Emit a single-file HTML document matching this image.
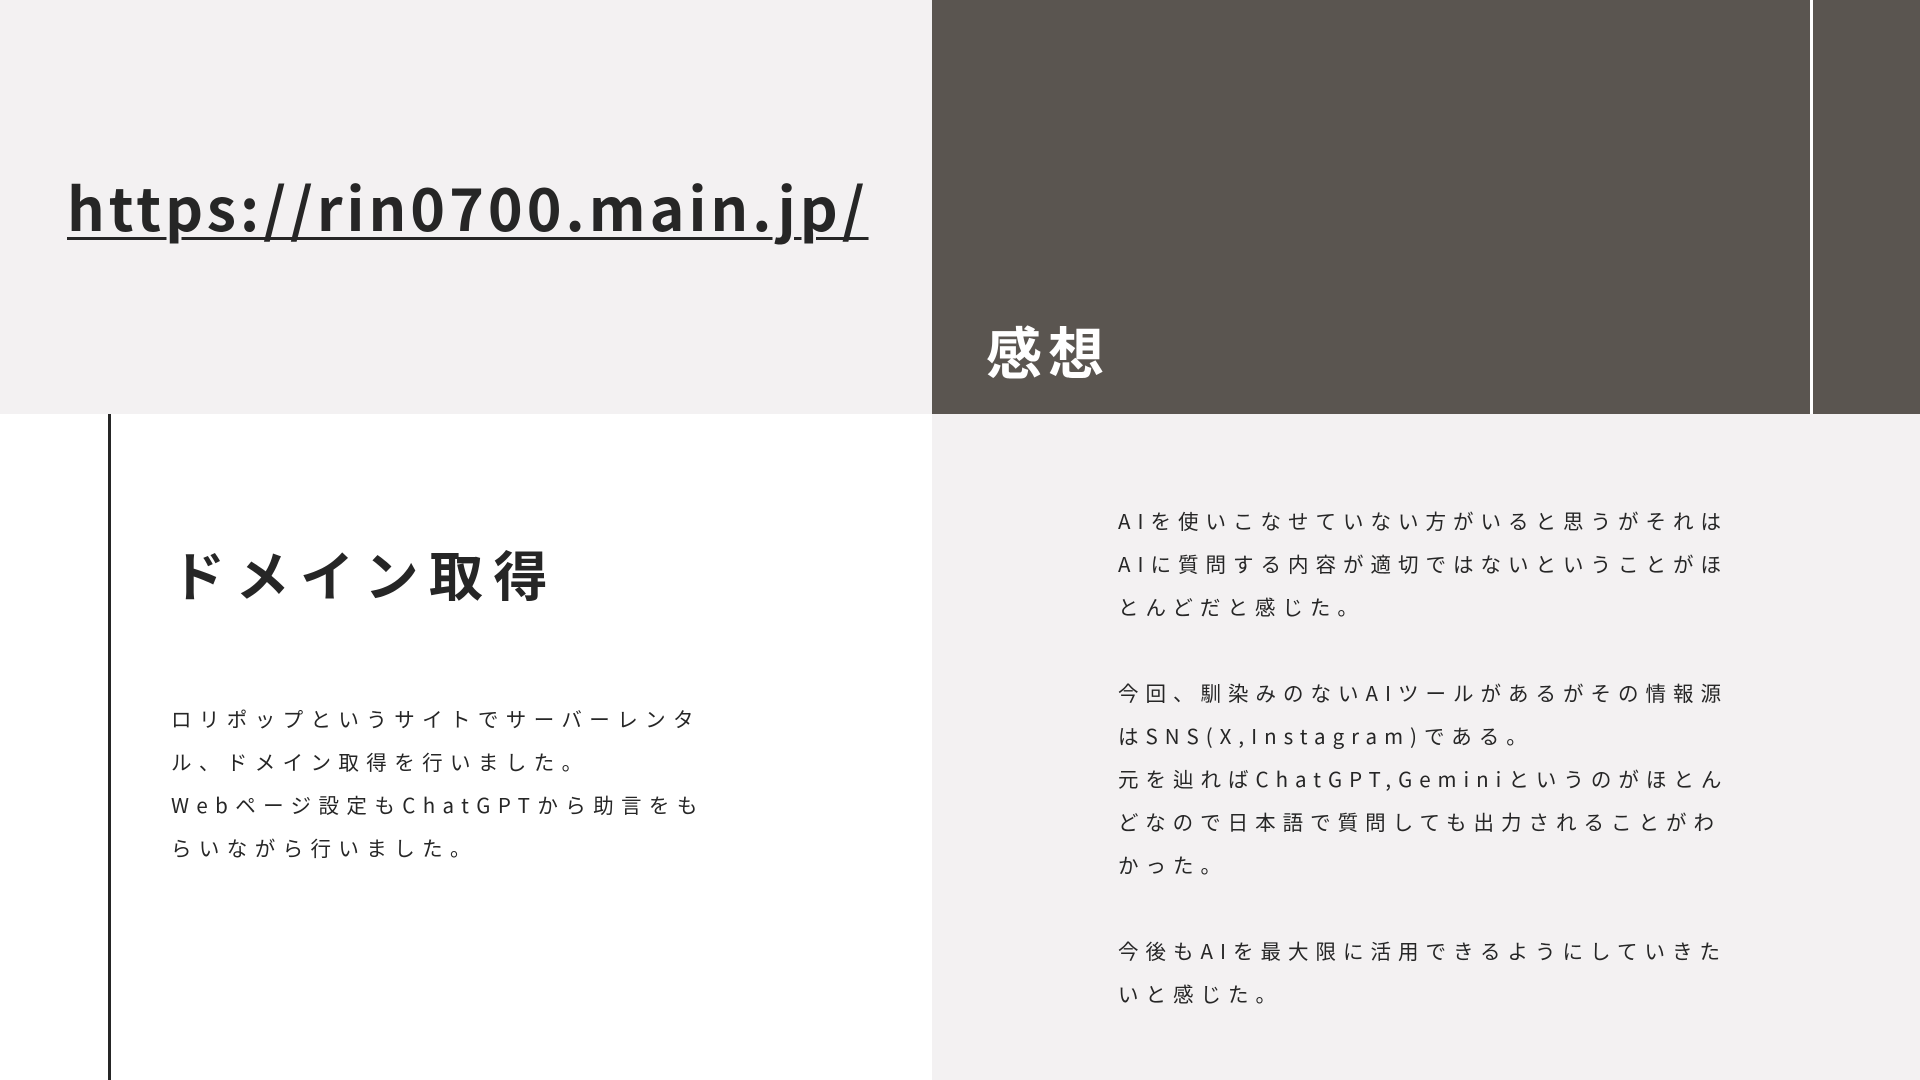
<!DOCTYPE html>
<html><head><meta charset="utf-8"><style>
body{margin:0;width:1920px;height:1080px;position:relative;overflow:hidden;background:#fff;font-family:"Liberation Sans","Noto Sans CJK JP",sans-serif;color:#262626}
div{position:absolute}
.tl{left:0;top:0;width:932px;height:414px;background:#f3f1f2}
.tr{left:932px;top:0;width:988px;height:414px;background:#5a5550}
.vl{left:1810px;top:0;width:3px;height:414px;background:#fff}
.br{left:932px;top:414px;width:988px;height:666px;background:#f3f1f2}
.ll{left:108px;top:414px;width:3px;height:666px;background:#262626}
.url{left:67px;top:161px;font-family:"Noto Sans CJK JP",sans-serif;font-weight:700;font-size:59px;letter-spacing:4px;text-decoration:underline;text-decoration-thickness:3px;text-underline-offset:6px;line-height:90px;white-space:nowrap}
.kanso{left:986px;top:311px;color:#fff;font-family:"Noto Sans CJK JP",sans-serif;font-weight:700;font-size:56px;letter-spacing:6px;line-height:80px}
.dm{left:171px;top:533px;font-family:"Noto Sans CJK JP",sans-serif;font-weight:700;font-size:54px;letter-spacing:10.5px;line-height:80px;white-space:nowrap}
.p{font-family:"Noto Sans CJK JP",sans-serif;font-size:20.5px;letter-spacing:7.4px;line-height:43px;white-space:nowrap}
</style></head><body>
<div class="tl"></div><div class="tr"></div><div class="vl"></div><div class="br"></div><div class="ll"></div>
<div class="url">https://rin0700.main.jp/</div>
<div class="kanso">感想</div>
<div class="dm">ドメイン取得</div>
<div class="p" style="left:171px;top:697px">ロリポップというサイトでサーバーレンタ<br>ル、ドメイン取得を行いました。<br>Webページ設定もChatGPTから助言をも<br>らいながら行いました。</div>
<div class="p" style="left:1118px;top:499px;letter-spacing:7px">AIを使いこなせていない方がいると思うがそれは<br>AIに質問する内容が適切ではないということがほ<br>とんどだと感じた。<br><br>今回、馴染みのないAIツールがあるがその情報源<br>はSNS(X,Instagram)である。<br>元を辿ればChatGPT,Geminiというのがほとん<br>どなので日本語で質問しても出力されることがわ<br>かった。<br><br>今後もAIを最大限に活用できるようにしていきた<br>いと感じた。</div>
</body></html>
